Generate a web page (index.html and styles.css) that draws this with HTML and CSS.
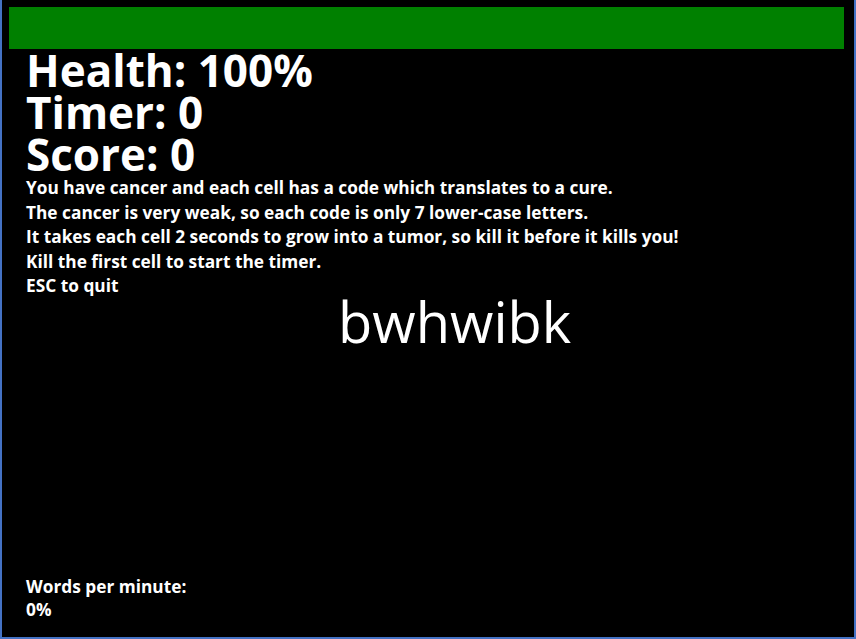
FILE: index.html
```html
<!DOCTYPE html>
<html>
<head>
<meta charset="utf-8">
<link rel="stylesheet" href="styles.css">
</head>
<body>
<div class="frame">
  <div class="healthbar"></div>
  <div class="stats">
    <div class="stat">Health: 100%</div>
    <div class="stat">Timer: 0</div>
    <div class="stat">Score: 0</div>
  </div>
  <div class="info">
    <div>You have cancer and each cell has a code which translates to a cure.</div>
    <div>The cancer is very weak, so each code is only 7 lower-case letters.</div>
    <div>It takes each cell 2 seconds to grow into a tumor, so kill it before it kills you!</div>
    <div>Kill the first cell to start the timer.</div>
    <div>ESC to quit</div>
  </div>
  <div class="word">bwhwibk</div>
  <div class="wpm">
    <div>Words per minute:</div>
    <div>0%</div>
  </div>
</div>
</body>
</html>
```
FILE: styles.css
```css
html, body {
  margin: 0;
  padding: 0;
  background: #000;
}
.frame {
  box-sizing: border-box;
  width: 856px;
  height: 639px;
  border-left: 2px solid #4472c4;
  border-right: 2px solid #4472c4;
  border-bottom: 2px solid #4472c4;
  padding: 7px 10px 0 7px;
  display: flex;
  flex-direction: column;
  color: #fff;
  font-family: "Open Sans", sans-serif;
  font-weight: 700;
}
.healthbar {
  height: 42px;
  flex: none;
  background: #008000;
}
.stats {
  padding-left: 17px;
}
.stat {
  font-size: 44px;
  line-height: 42px;
}
.info {
  padding-top: 1px;
  padding-left: 17px;
  font-size: 17.3px;
  line-height: 24.5px;
}
.word {
  font-weight: 400;
  font-size: 56px;
  line-height: 44px;
  padding-left: 329px;
}
.wpm {
  margin-top: auto;
  padding-left: 17px;
  padding-bottom: 16px;
  font-size: 17.3px;
  line-height: 23px;
}
```
